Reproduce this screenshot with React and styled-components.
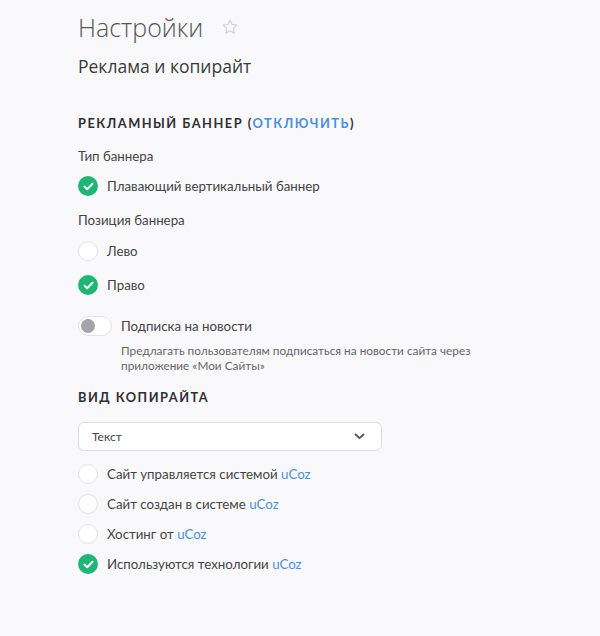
import React from "react";
import styled, { createGlobalStyle } from "styled-components";

const Global = createGlobalStyle`
  html, body {
    margin: 0;
    background: #f9f9fb;
  }
  body {
    font-family: "Lato", "Noto Sans", sans-serif;
    color: #444;
  }
`;

const Page = styled.div`
  padding: 8px 0 40px 78px;
  width: 600px;
  box-sizing: border-box;
`;

const TitleRow = styled.div`
  display: flex;
  align-items: center;
  gap: 18px;
  height: 38px;
`;

const Title = styled.h1`
  margin: 0;
  font-family: "Open Sans", sans-serif;
  font-size: 25px;
  font-weight: 300;
  color: #555;
  line-height: 38px;
`;

const Subtitle = styled.h2`
  margin: 7px 0 0;
  font-family: "Open Sans", sans-serif;
  font-size: 17.5px;
  font-weight: 400;
  color: #3a3a3a;
  line-height: 26px;
`;

const SectionHead = styled.div`
  margin-top: ${(p) => p.$top || 35}px;
  font-size: 12.8px;
  font-weight: 700;
  letter-spacing: 1.5px;
  text-transform: uppercase;
  color: #2f2f33;
  line-height: 18px;
`;

const Link = styled.a`
  color: #4a8fe0;
  text-decoration: none;
`;

const Label = styled.div`
  margin-top: ${(p) => p.$top || 12}px;
  font-size: 13.3px;
  color: #444;
  line-height: 20px;
`;

const OptionList = styled.div`
  display: flex;
  flex-direction: column;
  gap: ${(p) => p.$gap || 14}px;
  margin-top: ${(p) => p.$top || 10}px;
`;

const Option = styled.label`
  display: flex;
  align-items: center;
  gap: 9px;
  font-size: 13.3px;
  color: #444;
  line-height: 20px;
`;

const Circle = styled.span`
  width: 20px;
  height: 20px;
  border-radius: 50%;
  box-sizing: border-box;
  flex-shrink: 0;
  display: flex;
  align-items: center;
  justify-content: center;
  background: ${(p) => (p.$on ? "#1fb574" : "#fff")};
  border: ${(p) => (p.$on ? "none" : "1.5px solid #e2e2e6")};
`;

const ToggleRow = styled.div`
  display: flex;
  align-items: center;
  gap: 9px;
  margin-top: 21px;
  font-size: 13.3px;
  color: #444;
  line-height: 20px;
`;

const Toggle = styled.span`
  width: 34px;
  height: 20px;
  box-sizing: border-box;
  border: 1.5px solid #e2e2e6;
  border-radius: 10px;
  background: #fff;
  display: flex;
  align-items: center;
  padding-left: 2px;
  flex-shrink: 0;
`;

const Knob = styled.span`
  width: 14px;
  height: 14px;
  border-radius: 50%;
  background: #a4a4a8;
`;

const Hint = styled.div`
  margin: 7px 0 0 43px;
  font-size: 11.8px;
  line-height: 15px;
  color: #666;
  width: 360px;
`;

const Select = styled.div`
  margin-top: 16px;
  width: 304px;
  height: 29px;
  box-sizing: border-box;
  border: 1px solid #dcdce0;
  border-radius: 6px;
  background: #fff;
  display: flex;
  align-items: center;
  justify-content: space-between;
  padding: 0 16px 0 13px;
  font-size: 12px;
  color: #444;
`;

const Check = () => (
  <svg width="11" height="9" viewBox="0 0 11 9">
    <path d="M1.5 4.6 L4.2 7.2 L9.5 1.8" fill="none" stroke="#fff" strokeWidth="2" strokeLinecap="round" strokeLinejoin="round" />
  </svg>
);

const Radio = ({ on, children }) => (
  <Option>
    <Circle $on={on}>{on && <Check />}</Circle>
    <span>{children}</span>
  </Option>
);

const Star = () => (
  <svg width="18" height="18" viewBox="0 0 24 24">
    <path
      d="M12 2.8l2.8 5.8 6.3.9-4.6 4.4 1.1 6.3L12 17.2l-5.6 3 1.1-6.3L2.9 9.5l6.3-.9z"
      fill="none"
      stroke="#d4d4d8"
      strokeWidth="1.6"
      strokeLinejoin="round"
    />
  </svg>
);

const Chevron = () => (
  <svg width="11" height="7" viewBox="0 0 11 7">
    <path d="M1.5 1.5 L5.5 5.2 L9.5 1.5" fill="none" stroke="#555" strokeWidth="1.8" strokeLinecap="round" strokeLinejoin="round" />
  </svg>
);

export default function App() {
  return (
    <Page>
      <Global />
      <TitleRow>
        <Title>Настройки</Title>
        <Star />
      </TitleRow>
      <Subtitle>Реклама и копирайт</Subtitle>

      <SectionHead $top={35}>
        Рекламный баннер (<Link href="#">отключить</Link>)
      </SectionHead>
      <Label $top={14}>Тип баннера</Label>
      <OptionList $top={10}>
        <Radio on>Плавающий вертикальный баннер</Radio>
      </OptionList>
      <Label $top={14}>Позиция баннера</Label>
      <OptionList $top={11}>
        <Radio>Лево</Radio>
        <Radio on>Право</Radio>
      </OptionList>

      <ToggleRow>
        <Toggle>
          <Knob />
        </Toggle>
        <span>Подписка на новости</span>
      </ToggleRow>
      <Hint>Предлагать пользователям подписаться на новости сайта через приложение «Мои Сайты»</Hint>

      <SectionHead $top={15}>Вид копирайта</SectionHead>
      <Select>
        <span>Текст</span>
        <Chevron />
      </Select>
      <OptionList $top={13} $gap={10}>
        <Radio>
          Сайт управляется системой <Link href="#">uCoz</Link>
        </Radio>
        <Radio>
          Сайт создан в системе <Link href="#">uCoz</Link>
        </Radio>
        <Radio>
          Хостинг от <Link href="#">uCoz</Link>
        </Radio>
        <Radio on>
          Используются технологии <Link href="#">uCoz</Link>
        </Radio>
      </OptionList>
    </Page>
  );
}
